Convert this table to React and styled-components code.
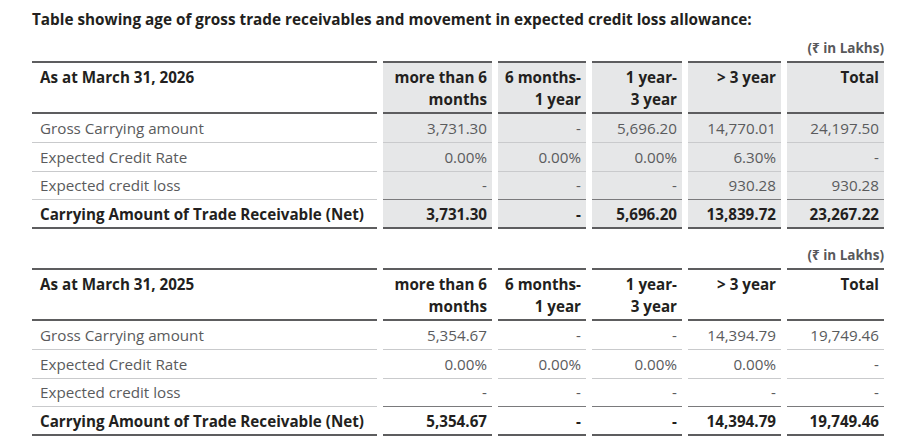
import React from "react";
import styled, { createGlobalStyle } from "styled-components";

const GlobalStyle = createGlobalStyle`
  body {
    margin: 0;
    background: #ffffff;
    font-family: "Open Sans", "Noto Sans", sans-serif;
  }
`;

const Page = styled.div`
  padding: 7px 33px 0 32px;
  width: 852px;
`;

const Title = styled.h1`
  margin: 0;
  font-size: 15.3px;
  font-weight: 700;
  color: #231f20;
  line-height: 24px;
  white-space: nowrap;
`;

const Unit = styled.div`
  text-align: right;
  font-size: 13.5px;
  font-weight: 700;
  color: #58595b;
  line-height: 20px;
  margin-top: ${(p) => p.$top}px;
  margin-bottom: 3px;
`;

const Grid = styled.div`
  display: grid;
  grid-template-columns: 345px 109px 88px 90px 93px 97px;
  column-gap: 6px;
`;

const Cell = styled.div`
  display: flex;
  align-items: center;
  justify-content: ${(p) => (p.$first ? "flex-start" : "flex-end")};
  text-align: ${(p) => (p.$first ? "left" : "right")};
  padding: ${(p) => (p.$first ? "0 0 0 8px" : "0 5px 0 0")};
  font-size: 15.2px;
  white-space: nowrap;
  background: ${(p) => (p.$shade && !p.$first ? "#e6e7e8" : "transparent")};
`;

const HeadCell = styled(Cell)`
  align-items: flex-start;
  height: 53px;
  box-sizing: border-box;
  padding-top: 4px;
  border-top: 2px solid #5d5d5f;
  border-bottom: 2px solid #5d5d5f;
  font-weight: 700;
  color: #231f20;
  line-height: 21.5px;
`;

const BodyCell = styled(Cell)`
  height: 28.75px;
  box-sizing: border-box;
  border-bottom: 1px solid ${(p) => (p.$beforeTotal && !p.$first ? "#7a7a7c" : "#c9cacc")};
  color: #5a5b5d;
`;

const TotalCell = styled(Cell)`
  height: 28.75px;
  box-sizing: border-box;
  border-bottom: 2px solid #5d5d5f;
  font-weight: 700;
  color: #231f20;
`;

const headers = [
  ["more than 6", "months"],
  ["6 months-", "1 year"],
  ["1 year-", "3 year"],
  ["> 3 year"],
  ["Total"],
];

const tables = [
  {
    date: "As at March 31, 2026",
    shade: true,
    unitTop: 7,
    rows: [
      ["Gross Carrying amount", "3,731.30", "-", "5,696.20", "14,770.01", "24,197.50"],
      ["Expected Credit Rate", "0.00%", "0.00%", "0.00%", "6.30%", "-"],
      ["Expected credit loss", "-", "-", "-", "930.28", "930.28"],
    ],
    total: ["Carrying Amount of Trade Receivable (Net)", "3,731.30", "-", "5,696.20", "13,839.72", "23,267.22"],
  },
  {
    date: "As at March 31, 2025",
    shade: false,
    unitTop: 16,
    rows: [
      ["Gross Carrying amount", "5,354.67", "-", "-", "14,394.79", "19,749.46"],
      ["Expected Credit Rate", "0.00%", "0.00%", "0.00%", "0.00%", "-"],
      ["Expected credit loss", "-", "-", "-", "-", "-"],
    ],
    total: ["Carrying Amount of Trade Receivable (Net)", "5,354.67", "-", "-", "14,394.79", "19,749.46"],
  },
];

function AgeTable({ data }) {
  return (
    <>
      <Unit $top={data.unitTop}>(₹ in Lakhs)</Unit>
      <Grid>
        <HeadCell $first $shade={data.shade}>{data.date}</HeadCell>
        {headers.map((h, i) => (
          <HeadCell key={i} $shade={data.shade}>
            <span>
              {h.map((line, j) => (
                <React.Fragment key={j}>
                  {j > 0 && <br />}
                  {line}
                </React.Fragment>
              ))}
            </span>
          </HeadCell>
        ))}
        {data.rows.map((row, r) =>
          row.map((v, c) => (
            <BodyCell
              key={`${r}-${c}`}
              $first={c === 0}
              $shade={data.shade}
              $beforeTotal={r === data.rows.length - 1}
            >
              {v}
            </BodyCell>
          ))
        )}
        {data.total.map((v, c) => (
          <TotalCell key={c} $first={c === 0} $shade={data.shade}>
            {v}
          </TotalCell>
        ))}
      </Grid>
    </>
  );
}

export default function App() {
  return (
    <>
      <GlobalStyle />
      <Page>
        <Title>Table showing age of gross trade receivables and movement in expected credit loss allowance:</Title>
        {tables.map((t) => (
          <AgeTable key={t.date} data={t} />
        ))}
      </Page>
    </>
  );
}
